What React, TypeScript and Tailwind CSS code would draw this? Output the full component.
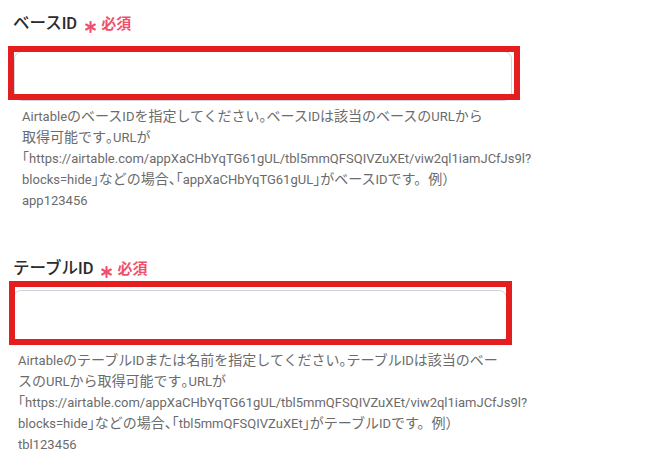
import React from "react";

const FONT = "font-['Roboto','Noto_Sans_CJK_JP',sans-serif]";

// "`" before a character renders that character with half-width punctuation.
function T({ s }: { s: string }) {
  const tokens: { t: string; kind: "latin" | "cjk" | "half" }[] = [];
  let i = 0;
  while (i < s.length) {
    const ch = s[i];
    if (ch === "`") {
      tokens.push({ t: s[i + 1], kind: "half" });
      i += 2;
      continue;
    }
    const latin = /[\x20-\x7e]/.test(ch);
    const kind = latin ? "latin" : "cjk";
    const last = tokens[tokens.length - 1];
    if (last && last.kind === kind) last.t += ch;
    else tokens.push({ t: ch, kind });
    i += 1;
  }
  return (
    <div>
      {tokens.map((tk, k) =>
        tk.kind === "latin" ? (
          <span key={k} className="text-[13px]">{tk.t}</span>
        ) : tk.kind === "half" ? (
          <span key={k} className="[font-feature-settings:'halt']">{tk.t}</span>
        ) : (
          <span key={k}>{tk.t}</span>
        )
      )}
    </div>
  );
}

function Star() {
  return (
    <svg width="11" height="12" viewBox="0 0 11 12" className="translate-y-[3px]">
      <g stroke="#f0506a" strokeWidth="2.1" strokeLinecap="round">
        <line x1="5.5" y1="1" x2="5.5" y2="11" />
        <line x1="1.2" y1="3.5" x2="9.8" y2="8.5" />
        <line x1="1.2" y1="8.5" x2="9.8" y2="3.5" />
      </g>
    </svg>
  );
}

function Label({ text }: { text: string }) {
  return (
    <div className="flex items-center h-[20px] leading-[20px]">
      <span className="text-[16.5px] font-medium text-[#2b2b2b]">{text}</span>
      <span className="ml-[8px] flex items-center"><Star /></span>
      <span className="ml-[5px] text-[15px] font-bold text-[#f0506a]">必須</span>
    </div>
  );
}

export default function App() {
  return (
    <div className={`w-[649px] h-[463px] bg-white overflow-hidden ${FONT}`}>
      <div className="pt-[14px] pl-[13px]">
        <Label text="ベースID" />
        <div className="relative mt-[17px] ml-[1px] w-[498px] h-[50px] rounded-lg border border-[#cfd4db] bg-white">
          <div className="absolute left-[-7px] right-[-9px] top-[-6px] bottom-[0px] border-[6px] border-[#e41e1e]" />
        </div>
        <div className="mt-[5px] pl-[9px] text-[14px] leading-[20px] text-[#6b6b6b] whitespace-nowrap">
          <T s="AirtableのベースIDを指定してください`。ベースIDは該当のベースのURLから" />
          <T s="取得可能です`。URLが" />
          <T s="`「https://airtable.com/appXaCHbYqTG61gUL/tbl5mmQFSQIVZuXEt/viw2ql1iamJCfJs9l?" />
          <T s="blocks=hide`」などの場合`、「appXaCHbYqTG61gUL`」がベースIDです。例）" />
          <T s="app123456" />
        </div>

        <div className="mt-[48px]">
          <Label text="テーブルID" />
        </div>
        <div className="relative mt-[11px] w-[494px] h-[55px] rounded-lg border border-[#cfd4db] bg-white">
          <div className="absolute left-[-5px] right-[-6px] top-[-10px] bottom-[-1px] border-[6px] border-[#e41e1e]" />
        </div>
        <div className="mt-[5px] pl-[5px] text-[14px] leading-[20px] text-[#6b6b6b] whitespace-nowrap">
          <T s="AirtableのテーブルIDまたは名前を指定してください`。テーブルIDは該当のベー" />
          <T s="スのURLから取得可能です`。URLが" />
          <T s="`「https://airtable.com/appXaCHbYqTG61gUL/tbl5mmQFSQIVZuXEt/viw2ql1iamJCfJs9l?" />
          <T s="blocks=hide`」などの場合`、「tbl5mmQFSQIVZuXEt`」がテーブルIDです。例）" />
          <T s="tbl123456" />
        </div>
      </div>
    </div>
  );
}
